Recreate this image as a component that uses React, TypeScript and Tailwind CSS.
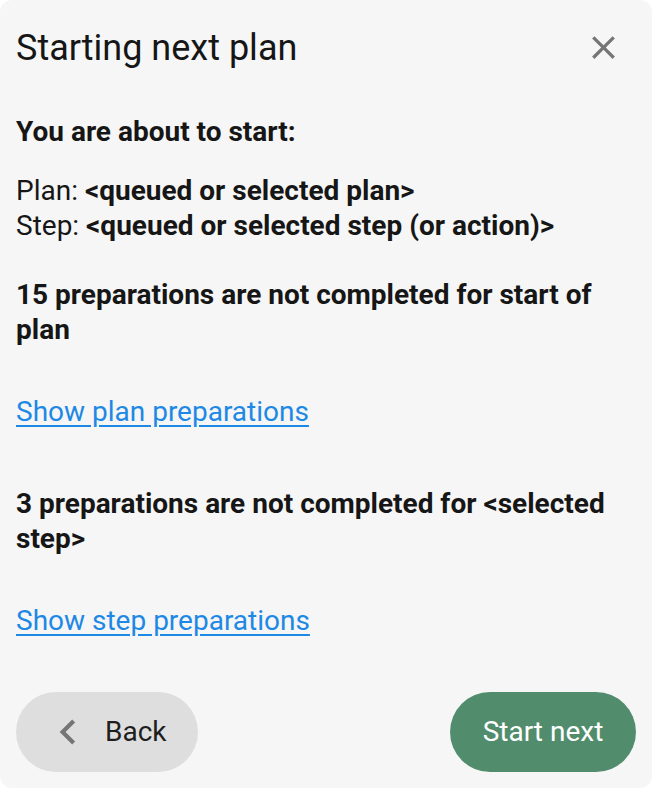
import React from "react";

function CloseIcon() {
  return (
    <svg viewBox="0 0 24 24" className="w-[39px] h-[39px]" fill="#757575">
      <path d="M19 6.41L17.59 5 12 10.59 6.41 5 5 6.41 10.59 12 5 17.59 6.41 19 12 13.41 17.59 19 19 17.59 13.41 12z" />
    </svg>
  );
}

function ChevronLeft() {
  return (
    <svg viewBox="0 0 24 24" className="w-[50px] h-[50px]" fill="#757575">
      <path d="M15.41 7.41L14 6l-6 6 6 6 1.41-1.41L10.83 12z" />
    </svg>
  );
}

export default function App() {
  return (
    <div className="w-[652px] h-[788px] bg-white" style={{ fontFamily: "Roboto, 'Noto Sans', sans-serif" }}>
      <div className="w-full h-full bg-[#f6f6f6] rounded-[12px] flex flex-col px-4 pt-[28px] pb-4 text-[#161616]">
        <div className="flex items-start justify-between">
          <h1 className="text-[36px] leading-[40px] font-normal">Starting next plan</h1>
          <button className="mr-[13px]" aria-label="Close">
            <CloseIcon />
          </button>
        </div>

        <div className="mt-[46px] text-[28px] leading-[35px]">
          <p className="font-bold">You are about to start:</p>
          <p className="mt-[24px]">
            Plan: <span className="font-bold">&lt;queued or selected plan&gt;</span>
          </p>
          <p>
            Step: <span className="font-bold">&lt;queued or selected step (or action)&gt;</span>
          </p>
          <p className="mt-[34px] font-bold">15 preparations are not completed for start of plan</p>
          <p className="mt-[47px]">
            <a href="#" className="text-[#1e88e5] underline underline-offset-[4px]">
              Show plan preparations
            </a>
          </p>
          <p className="mt-[57px] font-bold">3 preparations are not completed for &lt;selected step&gt;</p>
          <p className="mt-[47px]">
            <a href="#" className="text-[#1e88e5] underline underline-offset-[4px]">
              Show step preparations
            </a>
          </p>
        </div>

        <div className="mt-auto flex items-center justify-between">
          <button className="h-[80px] w-[182px] rounded-full bg-[#dedede] flex items-center pl-[27px] text-[28px] text-[#1e1e1e]">
            <ChevronLeft />
            <span className="ml-[12px]">Back</span>
          </button>
          <button className="h-[80px] w-[186px] rounded-full bg-[#518d6d] text-white text-[28px] flex items-center justify-center">
            Start next
          </button>
        </div>
      </div>
    </div>
  );
}
